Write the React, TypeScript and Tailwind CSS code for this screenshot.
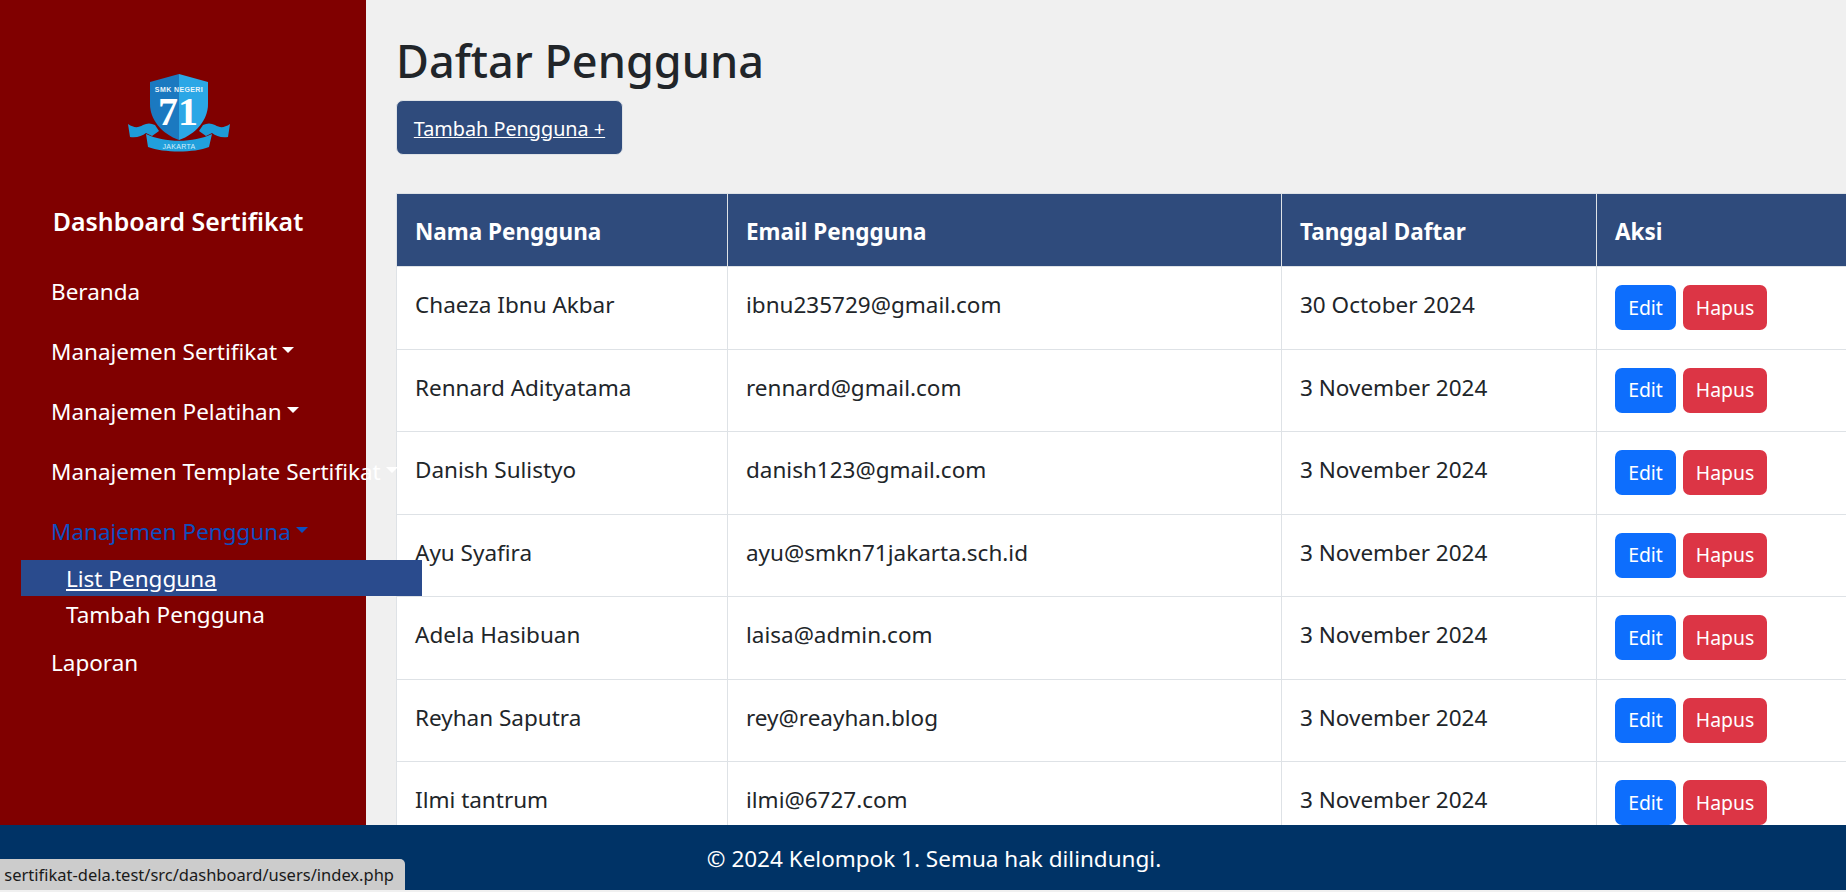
import React from 'react'

const users = [
  { name: 'Chaeza Ibnu Akbar', email: 'ibnu235729@gmail.com', date: '30 October 2024' },
  { name: 'Rennard Adityatama', email: 'rennard@gmail.com', date: '3 November 2024' },
  { name: 'Danish Sulistyo', email: 'danish123@gmail.com', date: '3 November 2024' },
  { name: 'Ayu Syafira', email: 'ayu@smkn71jakarta.sch.id', date: '3 November 2024' },
  { name: 'Adela Hasibuan', email: 'laisa@admin.com', date: '3 November 2024' },
  { name: 'Reyhan Saputra', email: 'rey@reayhan.blog', date: '3 November 2024' },
  { name: 'Ilmi tantrum', email: 'ilmi@6727.com', date: '3 November 2024' },
]

const Caret = () => (
  <span className="ml-[5px] inline-block -translate-y-[2px] border-x-[6.5px] border-t-[6.5px] border-x-transparent border-t-current" />
)

const Logo = () => (
  <svg width="102" height="80" viewBox="0 0 102 80" className="block">
    {/* ribbon tails */}
    <path d="M0 50 C6 54 10 54 15 51 C19 49 23 49 27 51 L31 57 L24 62 L18 59 C14 62 9 64 2 63 Z" fill="#1e9bd8" />
    <path d="M102 50 C96 54 92 54 87 51 C83 49 79 49 75 51 L71 57 L78 62 L84 59 C88 62 93 64 100 63 Z" fill="#1e9bd8" />
    {/* shield */}
    <path d="M51 0 L22 8 L22 30 C22 46 34 60 51 66 Z" fill="#1b79c0" />
    <path d="M51 0 L80 8 L80 30 C80 46 68 60 51 66 Z" fill="#2ba7e6" />
    {/* ribbon */}
    <path d="M18 60 C36 69 66 69 84 60 L81 73 C66 79 36 79 20 73 Z" fill="#21a0dc" />
    <text x="51" y="18" textAnchor="middle" fontSize="7" letterSpacing="0.4" fontWeight="700" fill="#e8f4fb" fontFamily="'Liberation Sans', sans-serif">SMK NEGERI</text>
    <text x="50" y="51" textAnchor="middle" fontSize="40" fontWeight="700" fill="#ffffff" fontFamily="'Liberation Serif', serif">71</text>
    <text x="51" y="75" textAnchor="middle" fontSize="7" letterSpacing="0.3" fill="#d6eefa" fontFamily="'Liberation Sans', sans-serif">JAKARTA</text>
  </svg>
)

const NavItem = ({ label, caret, active }: { label: string; caret?: boolean; active?: boolean }) => (
  <div
    className={
      'flex h-[60px] items-center whitespace-nowrap pl-[51px] ' +
      (active ? 'text-[#0d4fc0]' : 'text-white')
    }
  >
    {label}
    {caret && <Caret />}
  </div>
)

const Sidebar = () => (
  <aside className="relative z-10 w-[366px] shrink-0 bg-[#800000]">
    <div className="flex pt-[74px] pl-[128px]">
      <Logo />
    </div>
    <div className="mt-[51px] pr-[10px] text-center text-[24.9px] leading-[32px] font-semibold text-white">
      Dashboard Sertifikat
    </div>
    <nav className="mt-[25px]">
      <NavItem label="Beranda" />
      <NavItem label="Manajemen Sertifikat" caret />
      <NavItem label="Manajemen Pelatihan" caret />
      <NavItem label="Manajemen Template Sertifikat" caret />
      <NavItem label="Manajemen Pengguna" caret active />
      <div className="-mt-[2px]">
        <div className="ml-[21px] flex h-[36px] w-[401px] items-center bg-[#2a4b8d] pt-[2px] pl-[45px] text-white underline">
          List Pengguna
        </div>
        <div className="ml-[21px] flex h-[36px] items-center pt-[2px] pl-[45px] text-white">Tambah Pengguna</div>
      </div>
      <div className="mt-[1px] flex h-[60px] items-center pl-[51px] text-white">Laporan</div>
    </nav>
  </aside>
)

const UserTable = () => (
  <table className="w-[1450px] table-fixed border-collapse">
    <colgroup>
      <col className="w-[331px]" />
      <col className="w-[554px]" />
      <col className="w-[315px]" />
      <col className="w-[250px]" />
    </colgroup>
    <thead>
      <tr className="h-[73px] bg-[#2f4b7c] text-left text-white">
        {['Nama Pengguna', 'Email Pengguna', 'Tanggal Daftar', 'Aksi'].map((h) => (
          <th key={h} className="border border-[#dee2e6] px-[18px] pt-[4px] font-bold">
            {h}
          </th>
        ))}
      </tr>
    </thead>
    <tbody className="bg-white text-[#212529]">
      {users.map((u) => (
        <tr key={u.email} className="h-[82.5px]">
          <td className="border border-[#dee2e6] px-[18px] pt-[24px] align-top">{u.name}</td>
          <td className="border border-[#dee2e6] px-[18px] pt-[24px] align-top">{u.email}</td>
          <td className="border border-[#dee2e6] px-[18px] pt-[24px] align-top">{u.date}</td>
          <td className="border border-[#dee2e6] px-[18px]">
            <div className="flex gap-[7px] text-[19.4px]">
              <button className="h-[45px] w-[61px] rounded-[7px] bg-[#0d6efd] text-white">Edit</button>
              <button className="h-[45px] w-[84px] rounded-[7px] bg-[#dc3545] text-white">Hapus</button>
            </div>
          </td>
        </tr>
      ))}
    </tbody>
  </table>
)

export default function App() {
  return (
    <div className="relative flex h-[892px] w-[1846px] flex-col overflow-hidden bg-[#f0f0f0] font-['Noto_Sans',sans-serif] text-[22.5px] leading-[28px]">
      <div className="flex h-[825px] shrink-0">
        <Sidebar />
        <main className="min-w-0 flex-1 overflow-hidden pl-[30px]">
          <h1 className="pt-[29px] text-[45px] leading-[64px] font-medium text-[#212529]">Daftar Pengguna</h1>
          <a className="mt-[7px] flex h-[55px] w-[227px] items-center justify-center rounded-[7px] border border-[#dee2e6] bg-[#2f4b7c] pt-[2px] text-[19.8px] text-white underline">
            Tambah Pengguna +
          </a>
          <div className="mt-[38px]">
            <UserTable />
          </div>
        </main>
      </div>
      <footer className="flex h-[65px] shrink-0 items-center justify-center bg-[#003366] pt-[3px] pl-[22px] text-white">
        © 2024 Kelompok 1. Semua hak dilindungi.
      </footer>
      <div className="absolute bottom-[2px] left-0 flex h-[31px] w-[405px] items-center justify-end rounded-tr-[5px] bg-[#cccccc] pt-[1px] pr-[11px] text-[16.5px] whitespace-nowrap text-[#1a1a1a]">
        sertifikat-dela.test/src/dashboard/users/index.php
      </div>
    </div>
  )
}
